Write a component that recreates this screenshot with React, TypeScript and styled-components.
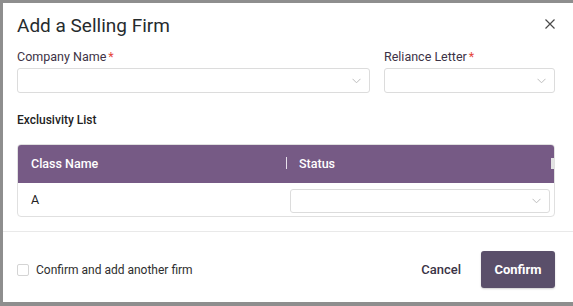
import React from "react";
import styled, { createGlobalStyle } from "styled-components";

const Global = createGlobalStyle`
  html, body { margin: 0; padding: 0; }
  body {
    background: #8e8e8e;
    font-family: Roboto, "Liberation Sans", sans-serif;
    width: 573px;
    height: 306px;
    overflow: hidden;
  }
  * { box-sizing: border-box; }
`;

const Backdrop = styled.div`
  padding: 3px 0 4px 3px;
  height: 306px;
`;

const Dialog = styled.div`
  background: #fff;
  height: 299px;
  display: flex;
  flex-direction: column;
`;

const Body = styled.div`
  padding: 12px 18px 0 14px;
  display: flex;
  flex-direction: column;
  height: 229px;
  border-bottom: 1px solid #e9e9e9;
`;

const Header = styled.div`
  display: flex;
  justify-content: space-between;
  align-items: flex-start;
  height: 34px;
`;

const Title = styled.h1`
  margin: 0;
  font-size: 19px;
  font-weight: 400;
  color: #262b2e;
  line-height: 22px;
`;

const Close = styled.button`
  border: 0;
  background: none;
  padding: 0;
  margin: 0 -4px 0 0;
  width: 18px;
  height: 18px;
  display: flex;
  align-items: center;
  justify-content: center;
  color: #4a4a4a;
  cursor: pointer;
`;

const FieldRow = styled.div`
  display: grid;
  grid-template-columns: 353px 171px;
  column-gap: 14px;
`;

const Field = styled.div`
  display: flex;
  flex-direction: column;
  gap: 3px;
`;

const Label = styled.label`
  font-size: 12.5px;
  color: #3d3346;
  line-height: 16px;
`;

const Req = styled.span`
  color: #e5463c;
  margin-left: 2px;
`;

const Select = styled.div<{ $h?: number }>`
  height: ${(p) => p.$h ?? 25}px;
  border: 1px solid #dcdcdc;
  border-radius: 3px;
  display: flex;
  align-items: center;
  justify-content: flex-end;
  padding-right: 8px;
  background: #fff;
`;

const SectionTitle = styled.div`
  margin-top: 20px;
  font-size: 12px;
  font-weight: 500;
  color: #222;
  line-height: 14px;
`;

const Table = styled.div`
  margin-top: 17px;
  border: 1px solid #e0e0e0;
  border-radius: 4px;
  overflow: hidden;
`;

const HeadRow = styled.div`
  background: #765a85;
  height: 38px;
  display: grid;
  grid-template-columns: 268px 1fr;
  align-items: center;
  position: relative;
`;

const HeadCell = styled.div<{ $divider?: boolean }>`
  color: #fff;
  font-size: 12.5px;
  font-weight: 500;
  padding-left: 13px;
  position: relative;
  line-height: 16px;
  &::before {
    content: "";
    display: ${(p) => (p.$divider ? "block" : "none")};
    position: absolute;
    left: 0;
    top: 1px;
    width: 1px;
    height: 12px;
    background: #e8e0ec;
  }
`;

const ScrollNub = styled.div`
  position: absolute;
  right: 0;
  top: 13px;
  width: 3px;
  height: 11px;
  background: #e3e3e3;
`;

const BodyRow = styled.div`
  height: 33px;
  display: grid;
  grid-template-columns: 272px 1fr;
  align-items: center;
`;

const Cell = styled.div<{ $control?: boolean }>`
  font-size: 12.5px;
  color: #222;
  padding-left: ${(p) => (p.$control ? 0 : 13)}px;
  padding-right: 4px;
  padding-top: ${(p) => (p.$control ? 2 : 0)}px;
`;

const Footer = styled.div`
  flex: 1;
  display: flex;
  align-items: center;
  justify-content: space-between;
  padding: 5px 18px 0 14px;
`;

const Check = styled.label`
  display: flex;
  align-items: center;
  gap: 7px;
  font-size: 12px;
  color: #2e2e2e;
`;

const Box = styled.span`
  width: 12px;
  height: 12px;
  border: 1px solid #d4d4d4;
  border-radius: 2px;
  background: #fff;
`;

const Actions = styled.div`
  display: flex;
  align-items: center;
  gap: 20px;
`;

const Ghost = styled.button`
  border: 0;
  background: none;
  font-family: inherit;
  font-size: 13px;
  font-weight: 500;
  color: #3a3346;
  padding: 0;
  cursor: pointer;
`;

const Primary = styled.button`
  border: 0;
  background: #5a4f6a;
  color: #fff;
  font-family: inherit;
  font-size: 13px;
  font-weight: 700;
  width: 74px;
  height: 37px;
  border-radius: 3px;
  box-shadow: 0 1px 2px rgba(0, 0, 0, 0.2);
  cursor: pointer;
`;

const Chevron = () => (
  <svg width="9" height="6" viewBox="0 0 9 6" fill="none">
    <path d="M0.5 0.8 L4.5 4.8 L8.5 0.8" stroke="#bdbdbd" strokeWidth="1" />
  </svg>
);

export default function App() {
  return (
    <>
      <Global />
      <Backdrop>
        <Dialog>
          <Body>
            <Header>
              <Title>Add a Selling Firm</Title>
              <Close aria-label="Close">
                <svg width="10" height="10" viewBox="0 0 10 10">
                  <path d="M0.5 0.5 L9.5 9.5 M9.5 0.5 L0.5 9.5" stroke="#4a4a4a" strokeWidth="1.2" />
                </svg>
              </Close>
            </Header>
            <FieldRow>
              <Field>
                <Label>
                  Company Name<Req>*</Req>
                </Label>
                <Select>
                  <Chevron />
                </Select>
              </Field>
              <Field>
                <Label>
                  Reliance Letter<Req>*</Req>
                </Label>
                <Select>
                  <Chevron />
                </Select>
              </Field>
            </FieldRow>
            <SectionTitle>Exclusivity List</SectionTitle>
            <Table>
              <HeadRow>
                <HeadCell>Class Name</HeadCell>
                <HeadCell $divider>Status</HeadCell>
                <ScrollNub />
              </HeadRow>
              <BodyRow>
                <Cell>A</Cell>
                <Cell $control>
                  <Select $h={24}>
                    <Chevron />
                  </Select>
                </Cell>
              </BodyRow>
            </Table>
          </Body>
          <Footer>
            <Check>
              <Box />
              Confirm and add another firm
            </Check>
            <Actions>
              <Ghost>Cancel</Ghost>
              <Primary>Confirm</Primary>
            </Actions>
          </Footer>
        </Dialog>
      </Backdrop>
    </>
  );
}
